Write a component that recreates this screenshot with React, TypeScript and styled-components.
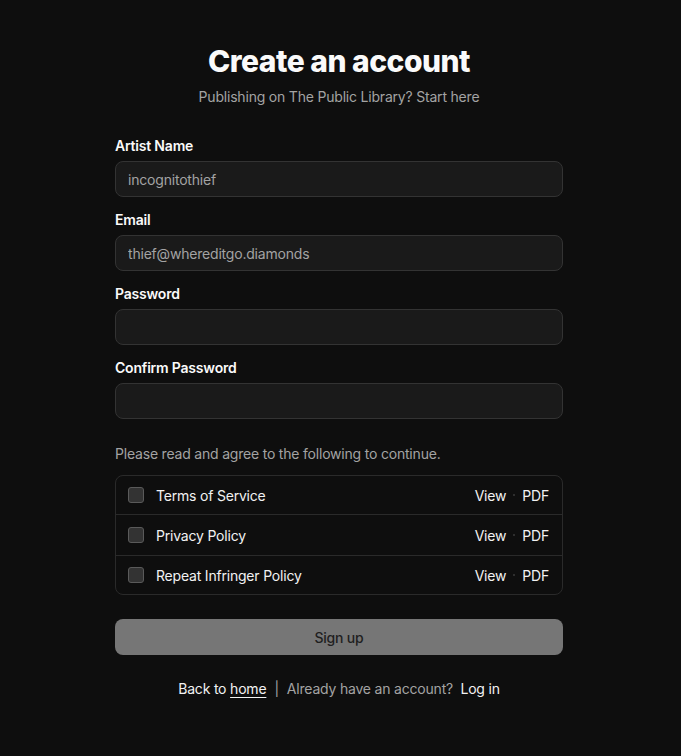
import React from "react";
import styled, { createGlobalStyle } from "styled-components";

const GlobalStyle = createGlobalStyle`
  html, body {
    margin: 0;
    padding: 0;
    background: #0e0e0e;
    color: #fafafa;
    font-family: Inter, "Noto Sans", sans-serif;
    letter-spacing: -0.2px;
  }
`;

const Page = styled.div`
  min-height: 756px;
  display: flex;
  justify-content: center;
  padding: 41px 3px 0 0;
  box-sizing: border-box;
`;

const Form = styled.div`
  width: 448px;
  display: flex;
  flex-direction: column;
`;

const Title = styled.h1`
  margin: 0;
  text-align: center;
  font-size: 30px;
  line-height: 40px;
  font-weight: 800;
  letter-spacing: -0.5px;
`;

const Subtitle = styled.p`
  margin: 6px 0 0;
  text-align: center;
  font-size: 14px;
  line-height: 20px;
  color: #a3a3a3;
`;

const Fields = styled.div`
  margin-top: 29px;
  display: flex;
  flex-direction: column;
  gap: 13px;
`;

const Field = styled.div`
  display: flex;
  flex-direction: column;
  gap: 5px;
`;

const Label = styled.label`
  font-size: 14px;
  line-height: 20px;
  font-weight: 600;
  color: #fafafa;
`;

const Input = styled.input`
  height: 36px;
  box-sizing: border-box;
  border: 1px solid #333333;
  border-radius: 8px;
  background: #1a1a1a;
  padding: 0 12px;
  font-family: inherit;
  font-size: 14px;
  letter-spacing: -0.2px;
  color: #a3a3a3;
  outline: none;
`;

const Notice = styled.p`
  margin: 25px 0 0;
  font-size: 14px;
  line-height: 20px;
  color: #a3a3a3;
`;

const Agreements = styled.div`
  margin-top: 11px;
  border: 1px solid #2a2a2a;
  border-radius: 8px;
  overflow: hidden;
`;

const Row = styled.div`
  height: 40px;
  display: flex;
  align-items: center;
  padding: 0 13px 0 12px;
  font-size: 14px;
  &:first-child,
  &:last-child {
    height: 38px;
  }
  & + & {
    border-top: 1px solid #2a2a2a;
  }
`;

const Box = styled.span`
  width: 14px;
  height: 14px;
  border: 1px solid #5a5a5a;
  border-radius: 3px;
  background: #333333;
`;

const RowLabel = styled.span`
  margin-left: 12px;
  flex: 1;
  color: #f2f2f2;
`;

const Links = styled.span`
  display: flex;
  align-items: center;
  gap: 7px;
  color: #f2f2f2;
`;

const Dot = styled.span`
  width: 2px;
  height: 2px;
  border-radius: 50%;
  background: #3a3a3a;
`;

const Button = styled.button`
  margin-top: 24px;
  height: 36px;
  border: none;
  border-radius: 8px;
  background: #767676;
  color: #1f1f1f;
  font-family: inherit;
  font-size: 14px;
  font-weight: 500;
  letter-spacing: -0.2px;
`;

const Footer = styled.p`
  margin: 24px 0 0;
  text-align: center;
  font-size: 14px;
  line-height: 20px;
  color: #a3a3a3;
`;

const Light = styled.span<{ $underline?: boolean }>`
  color: #f2f2f2;
  text-decoration: ${(p) => (p.$underline ? "underline" : "none")};
  text-underline-offset: 3px;
`;

const Sep = styled.span`
  margin: 0 8px;
  color: #a3a3a3;
`;

const fields = [
  { label: "Artist Name", value: "incognitothief", type: "text" },
  { label: "Email", value: "thief@whereditgo.diamonds", type: "email" },
  { label: "Password", value: "", type: "password" },
  { label: "Confirm Password", value: "", type: "password" },
];

const docs = ["Terms of Service", "Privacy Policy", "Repeat Infringer Policy"];

const App: React.FC = () => {
  return (
    <>
      <GlobalStyle />
      <Page>
        <Form>
          <Title>Create an account</Title>
          <Subtitle>Publishing on The Public Library? Start here</Subtitle>
          <Fields>
            {fields.map((f) => (
              <Field key={f.label}>
                <Label>{f.label}</Label>
                <Input type={f.type} defaultValue={f.value} />
              </Field>
            ))}
          </Fields>
          <Notice>Please read and agree to the following to continue.</Notice>
          <Agreements>
            {docs.map((d) => (
              <Row key={d}>
                <Box />
                <RowLabel>{d}</RowLabel>
                <Links>
                  <span>View</span>
                  <Dot />
                  <span>PDF</span>
                </Links>
              </Row>
            ))}
          </Agreements>
          <Button>Sign up</Button>
          <Footer>
            <Light>Back to </Light>
            <Light $underline>home</Light>
            <Sep>|</Sep>
            Already have an account?&nbsp;&nbsp;<Light>Log in</Light>
          </Footer>
        </Form>
      </Page>
    </>
  );
};

export default App;
